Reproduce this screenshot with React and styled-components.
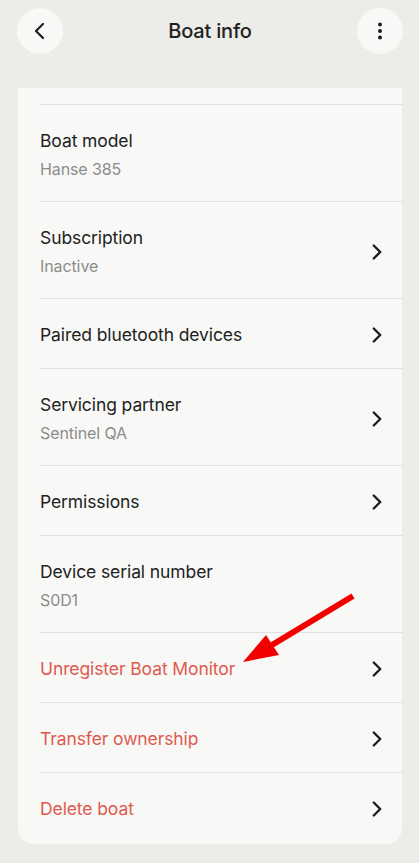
import React from 'react';
import styled, { createGlobalStyle } from 'styled-components';

const GlobalStyle = createGlobalStyle`
  html, body {
    margin: 0;
    padding: 0;
    background: #ecece8;
    font-family: Inter, "Noto Sans", sans-serif;
    -webkit-font-smoothing: antialiased;
  }
`;

const Screen = styled.div`
  position: relative;
  width: 419px;
  min-height: 863px;
  background: #ecece8;
  padding-bottom: 18px;
  box-sizing: border-box;
`;

const Header = styled.header`
  height: 88px;
  display: flex;
  align-items: flex-start;
  justify-content: space-between;
  padding: 8px 16px 0 17px;
  box-sizing: border-box;
`;

const RoundButton = styled.button`
  width: 46px;
  height: 46px;
  border-radius: 50%;
  border: none;
  background: #f8f8f7;
  display: flex;
  align-items: center;
  justify-content: center;
  padding: 0;
  color: #1c1c1c;
`;

const Title = styled.h1`
  margin: 0;
  line-height: 46px;
  font-size: 20px;
  font-weight: 500;
  color: #222;
  letter-spacing: -0.2px;
`;

const Card = styled.section`
  margin: 0 17px 0 18px;
  background: #f8f8f7;
  border-radius: 0 0 16px 16px;
  padding: 16px 0 2px;
`;

const Row = styled.div`
  margin-left: 22px;
  border-top: 1px solid #e0e0de;
  display: flex;
  align-items: center;
  justify-content: space-between;
  padding: ${p => (p.$sub ? '22px 0 18px' : '22px 0 19px')};
`;

const Texts = styled.div`
  display: flex;
  flex-direction: column;
`;

const Label = styled.div`
  font-size: 17.5px;
  line-height: 28px;
  color: ${p => (p.$danger ? '#df5a4e' : '#222')};
  letter-spacing: -0.1px;
`;

const Sub = styled.div`
  font-size: 16px;
  line-height: 28px;
  color: #8c8c8a;
  letter-spacing: -0.1px;
`;

const Chevron = styled.svg`
  width: 26px;
  height: 26px;
  margin-right: 12px;
  flex-shrink: 0;
`;

const Pointer = styled.svg`
  position: absolute;
  left: 0;
  top: 0;
  pointer-events: none;
`;

const rows = [
  { label: 'Boat model', sub: 'Hanse 385' },
  { label: 'Subscription', sub: 'Inactive', arrow: true },
  { label: 'Paired bluetooth devices', arrow: true },
  { label: 'Servicing partner', sub: 'Sentinel QA', arrow: true },
  { label: 'Permissions', arrow: true },
  { label: 'Device serial number', sub: 'S0D1' },
  { label: 'Unregister Boat Monitor', danger: true, arrow: true },
  { label: 'Transfer ownership', danger: true, arrow: true },
  { label: 'Delete boat', danger: true, arrow: true },
];

export default function App() {
  return (
    <Screen>
      <GlobalStyle />
      <Header>
        <RoundButton aria-label="Back">
          <svg width="24" height="24" viewBox="0 0 24 24" fill="none" stroke="currentColor" strokeWidth="2.2" strokeLinecap="round" strokeLinejoin="round">
            <path d="M15 5l-7 7 7 7" />
          </svg>
        </RoundButton>
        <Title>Boat info</Title>
        <RoundButton aria-label="More">
          <svg width="24" height="24" viewBox="0 0 24 24" fill="currentColor">
            <circle cx="12" cy="5.5" r="2" />
            <circle cx="12" cy="12" r="2" />
            <circle cx="12" cy="18.5" r="2" />
          </svg>
        </RoundButton>
      </Header>
      <Card>
        {rows.map(r => (
          <Row key={r.label} $sub={!!r.sub}>
            <Texts>
              <Label $danger={r.danger}>{r.label}</Label>
              {r.sub && <Sub>{r.sub}</Sub>}
            </Texts>
            {r.arrow && (
              <Chevron viewBox="0 0 24 24" fill="none" stroke="#1c1c1c" strokeWidth="2.2" strokeLinecap="round" strokeLinejoin="round">
                <path d="M9 6l6 6-6 6" />
              </Chevron>
            )}
          </Row>
        ))}
      </Card>
      <Pointer width="419" height="863">
        <line x1="353" y1="596" x2="272" y2="645" stroke="#f20000" strokeWidth="6" strokeLinecap="butt" />
        <polygon points="243,662 266,635 279,655" fill="#f20000" />
      </Pointer>
    </Screen>
  );
}
